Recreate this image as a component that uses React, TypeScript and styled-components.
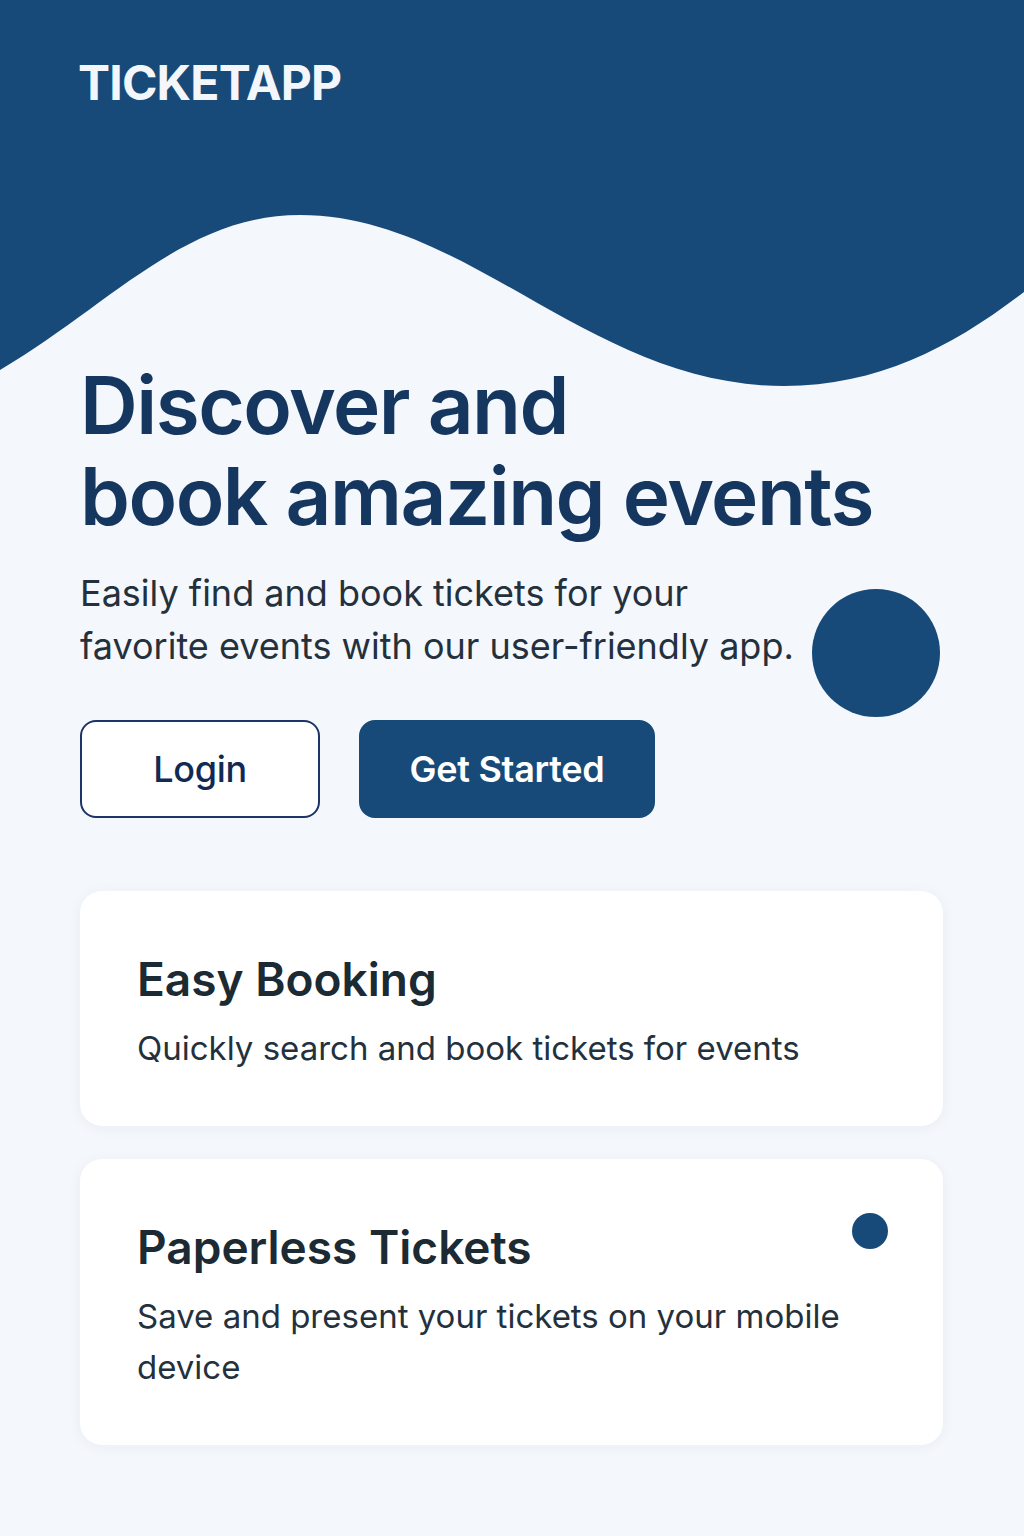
import styled, { createGlobalStyle } from "styled-components";

const NAVY = "#174a78";

const GlobalStyle = createGlobalStyle`
  html, body {
    margin: 0;
    padding: 0;
    background: #f4f7fb;
  }
  body {
    font-family: Inter, "Noto Sans", "Liberation Sans", sans-serif;
    -webkit-font-smoothing: antialiased;
  }
`;

const features = [
  {
    title: "Easy Booking",
    text: "Quickly search and book tickets for events",
    dot: false,
  },
  {
    title: "Paperless Tickets",
    text: "Save and present your tickets on your mobile device",
    dot: true,
  },
];

const Wave = () => (
  <WaveSvg viewBox="0 0 1024 400" preserveAspectRatio="none">
    <path
      d="M0 370 C 110 305, 185 215, 300 215 C 470 215, 590 386, 784 386 C 880 386, 955 345, 1024 292 L 1024 0 L 0 0 Z"
      fill={NAVY}
    />
  </WaveSvg>
);

export default function App() {
  return (
    <>
      <GlobalStyle />
      <Page>
        <Header>
          <Wave />
          <Logo>TICKETAPP</Logo>
        </Header>
        <Main>
          <Title>
            Discover and
            <br />
            book amazing events
          </Title>
          <IntroRow>
            <Intro>
              Easily find and book tickets for your
              <br />
              favorite events with our user-friendly app.
            </Intro>
            <BigDot />
          </IntroRow>
          <Buttons>
            <Button>Login</Button>
            <Button $primary>Get Started</Button>
          </Buttons>
          <Cards>
            {features.map((f) => (
              <Card key={f.title}>
                {f.dot ? <CardDot /> : null}
                <CardTitle>{f.title}</CardTitle>
                <CardText>{f.text}</CardText>
              </Card>
            ))}
          </Cards>
        </Main>
      </Page>
    </>
  );
}

const Page = styled.div`
  min-height: 1536px;
  background: #f4f7fb;
  overflow: hidden;
`;

const Header = styled.header`
  position: relative;
  height: 359px;
  padding: 59px 0 0 78px;
  box-sizing: border-box;
`;

const WaveSvg = styled.svg`
  position: absolute;
  top: 0;
  left: 0;
  width: 1024px;
  height: 400px;
  z-index: 0;
`;

const Logo = styled.div`
  position: relative;
  z-index: 1;
  color: #f3f6fa;
  font-size: 48px;
  line-height: 48px;
  font-weight: 700;
  letter-spacing: -0.8px;
`;

const Main = styled.main`
  position: relative;
  z-index: 1;
  padding: 0 81px 80px 80px;
`;

const Title = styled.h1`
  margin: 0;
  font-size: 80px;
  line-height: 91px;
  font-weight: 600;
  letter-spacing: -1.5px;
  color: #15375f;
`;

const IntroRow = styled.div`
  display: flex;
  justify-content: space-between;
  align-items: flex-start;
  margin-top: 26px;
`;

const Intro = styled.p`
  margin: 0;
  font-size: 36px;
  line-height: 53px;
  font-weight: 400;
  color: #24313d;
`;

const BigDot = styled.div`
  width: 128px;
  height: 128px;
  border-radius: 50%;
  background: ${NAVY};
  margin-top: 22px;
  margin-right: 3px;
  flex-shrink: 0;
`;

const Buttons = styled.div`
  display: flex;
  gap: 39px;
  margin-top: 3px;
`;

const Button = styled.button<{ $primary?: boolean }>`
  height: 98px;
  width: ${(p) => (p.$primary ? "296px" : "240px")};
  border-radius: 16px;
  box-sizing: border-box;
  border: 2px solid ${(p) => (p.$primary ? NAVY : "#1c3468")};
  background: ${(p) => (p.$primary ? NAVY : "#ffffff")};
  color: ${(p) => (p.$primary ? "#ffffff" : "#102a55")};
  font-family: inherit;
  font-size: 36px;
  font-weight: ${(p) => (p.$primary ? 600 : 500)};
  letter-spacing: -0.3px;
  cursor: pointer;
`;

const Cards = styled.div`
  display: flex;
  flex-direction: column;
  gap: 33px;
  margin-top: 73px;
`;

const Card = styled.section`
  position: relative;
  background: #ffffff;
  border-radius: 22px;
  padding: 62px 57px 52px 57px;
  box-shadow: 0 2px 14px rgba(30, 60, 110, 0.05);
`;

const CardDot = styled.span`
  position: absolute;
  top: 54px;
  right: 55px;
  width: 36px;
  height: 36px;
  border-radius: 50%;
  background: ${NAVY};
`;

const CardTitle = styled.h2`
  margin: 0 0 17px;
  font-size: 46px;
  line-height: 53px;
  font-weight: 600;
  color: #1c2a33;
`;

const CardText = styled.p`
  margin: 0;
  font-size: 33px;
  line-height: 51px;
  color: #24313d;
`;
